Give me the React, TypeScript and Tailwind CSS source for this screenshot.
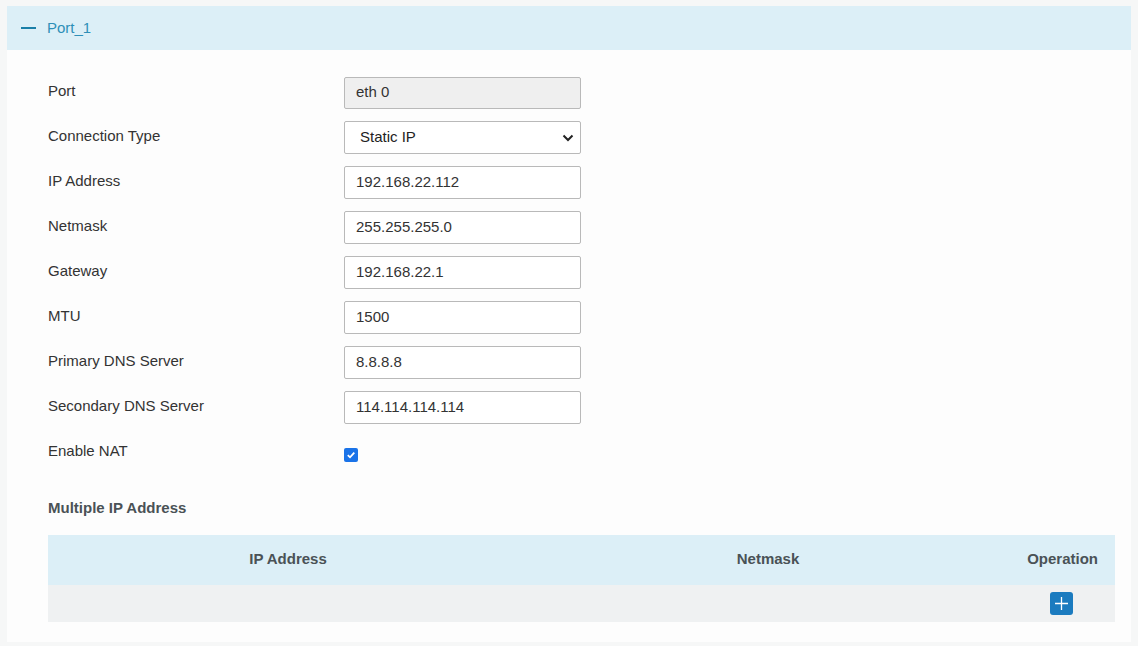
import React from "react";

const rows: { label: string; value?: string; kind: "ro" | "select" | "input" | "check" }[] = [
  { label: "Port", value: "eth 0", kind: "ro" },
  { label: "Connection Type", value: "Static IP", kind: "select" },
  { label: "IP Address", value: "192.168.22.112", kind: "input" },
  { label: "Netmask", value: "255.255.255.0", kind: "input" },
  { label: "Gateway", value: "192.168.22.1", kind: "input" },
  { label: "MTU", value: "1500", kind: "input" },
  { label: "Primary DNS Server", value: "8.8.8.8", kind: "input" },
  { label: "Secondary DNS Server", value: "114.114.114.114", kind: "input" },
  { label: "Enable NAT", kind: "check" },
];

export default function App() {
  return (
    <div
      className="w-[1138px] h-[646px] bg-[#f6f7f7] pt-[6px] px-[7px] overflow-hidden"
      style={{ fontFamily: '"Liberation Sans", Arial, sans-serif' }}
    >
      <div className="bg-[#fdfdfd] h-[636px]">
        <div className="h-[44px] bg-[#dceff7] flex items-center pl-[14px] gap-[11px]">
          <div className="w-[15px] h-[2px] bg-[#1a7fa8]" />
          <span className="text-[15px] text-[#2e8fb8]">Port_1</span>
        </div>
        <div className="pl-[41px] pr-[20px] pt-[20px]">
          {rows.map((r) => (
            <div key={r.label} className="flex items-center h-[45px]">
              <div className="w-[296px] text-[15px] text-[#333] -mt-[3px]">{r.label}</div>
              {r.kind === "ro" && (
                <div className="w-[237px] h-[32px] border border-[#b9b9b9] rounded-[2px] bg-[#efefef] flex items-center pl-[11px] text-[15px] text-[#333]">
                  {r.value}
                </div>
              )}
              {r.kind === "input" && (
                <div className="w-[237px] h-[33px] border border-[#b9b9b9] rounded-[2px] bg-white flex items-center pl-[11px] text-[15px] text-[#333]">
                  {r.value}
                </div>
              )}
              {r.kind === "select" && (
                <div className="w-[237px] h-[33px] border border-[#b9b9b9] rounded-[2px] bg-white flex items-center pl-[15px] pr-[6px] text-[15px] text-[#222] justify-between">
                  <span>{r.value}</span>
                  <svg width="12" height="8" viewBox="0 0 12 8">
                    <path d="M1.5 1.5 L6 6 L10.5 1.5" stroke="#222" strokeWidth="2" fill="none" />
                  </svg>
                </div>
              )}
              {r.kind === "check" && (
                <div className="w-[14px] h-[14px] rounded-[2px] bg-[#1a73e8] flex items-center justify-center mt-[4px]">
                  <svg width="10" height="10" viewBox="0 0 10 10">
                    <path d="M1.8 5.2 L4 7.3 L8.3 2.6" stroke="white" strokeWidth="1.8" fill="none" />
                  </svg>
                </div>
              )}
            </div>
          ))}
          <div className="mt-[22px] text-[15px] font-bold text-[#4a5256]">Multiple IP Address</div>
          <div className="mt-[15px] w-[1067px]">
            <div className="h-[50px] bg-[#dceff7] flex items-center text-[15px] font-bold text-[#4a5256]">
              <div className="w-[480px] text-center">IP Address</div>
              <div className="w-[480px] text-center">Netmask</div>
              <div className="flex-1 text-right pr-[17px]">Operation</div>
            </div>
            <div className="h-[37px] bg-[#eff1f2] flex items-center justify-end pr-[42px]">
              <div className="w-[23px] h-[23px] rounded-[3px] bg-[#1b7bbf] flex items-center justify-center">
                <svg width="15" height="15" viewBox="0 0 15 15">
                  <path d="M7.5 1 V14 M1 7.5 H14" stroke="white" strokeWidth="1.3" />
                </svg>
              </div>
            </div>
          </div>
        </div>
      </div>
    </div>
  );
}
